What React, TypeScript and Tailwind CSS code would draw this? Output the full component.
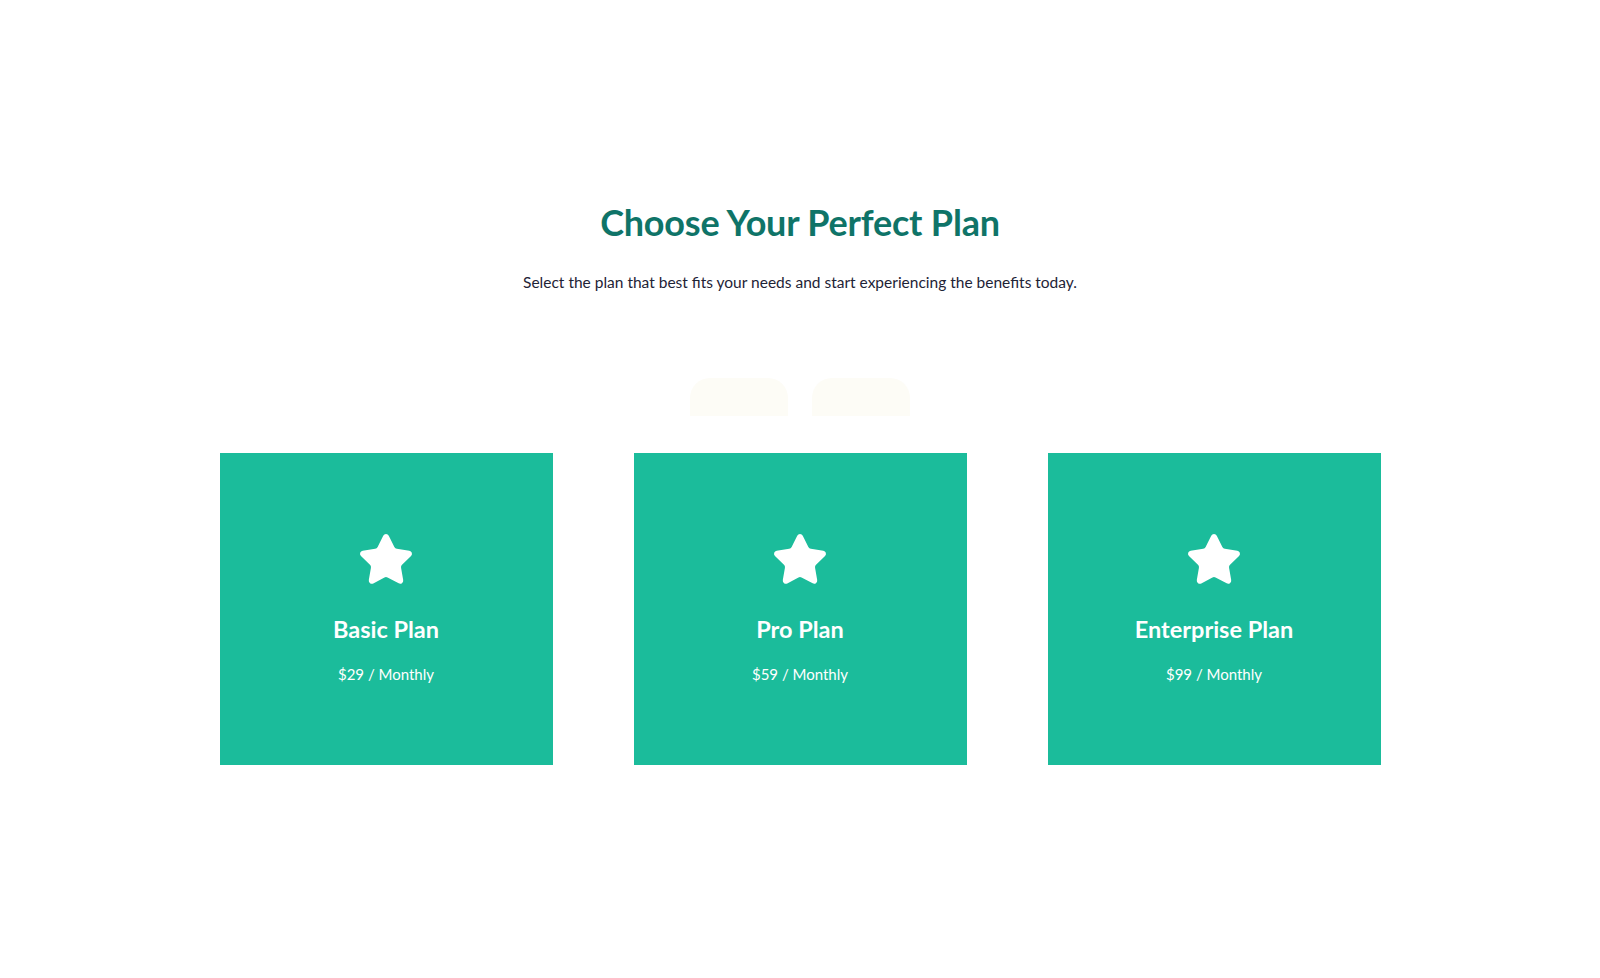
import React from "react";
import { Star } from "lucide-react";

const plans = [
  { name: "Basic Plan", price: "$29 / Monthly" },
  { name: "Pro Plan", price: "$59 / Monthly" },
  { name: "Enterprise Plan", price: "$99 / Monthly" },
];

export default function App() {
  return (
    <div
      className="w-full min-h-screen bg-white"
      style={{ fontFamily: "Lato, 'Noto Sans', sans-serif" }}
    >
      <div className="flex flex-col items-center pt-[200px]">
        <h1 className="text-[36px] leading-[44px] font-bold text-[#0f7468] tracking-[-0.2px]">
          Choose Your Perfect Plan
        </h1>
        <p className="mt-[28px] text-[15.5px] leading-[20px] text-[#1e2336]">
          Select the plan that best fits your needs and start experiencing the benefits today.
        </p>
        <div className="mt-[86px] h-[38px] overflow-hidden flex gap-[24px]">
          <div className="w-[98px] h-[60px] rounded-[20px] bg-[#fdfcf6]" />
          <div className="w-[98px] h-[60px] rounded-[20px] bg-[#fdfcf6]" />
        </div>
        <div className="mt-[37px] flex gap-[81px]">
          {plans.map((p) => (
            <div
              key={p.name}
              className="w-[333px] h-[312px] bg-[#1bbc9b] flex flex-col items-center pt-[78px] text-white"
            >
              <Star size={58} fill="white" stroke="white" strokeWidth={1.5} strokeLinejoin="round" />
              <div className="mt-[25px] text-[23.5px] leading-[30px] font-bold">{p.name}</div>
              <div className="mt-[20px] text-[15px] leading-[20px]">{p.price}</div>
            </div>
          ))}
        </div>
      </div>
    </div>
  );
}
